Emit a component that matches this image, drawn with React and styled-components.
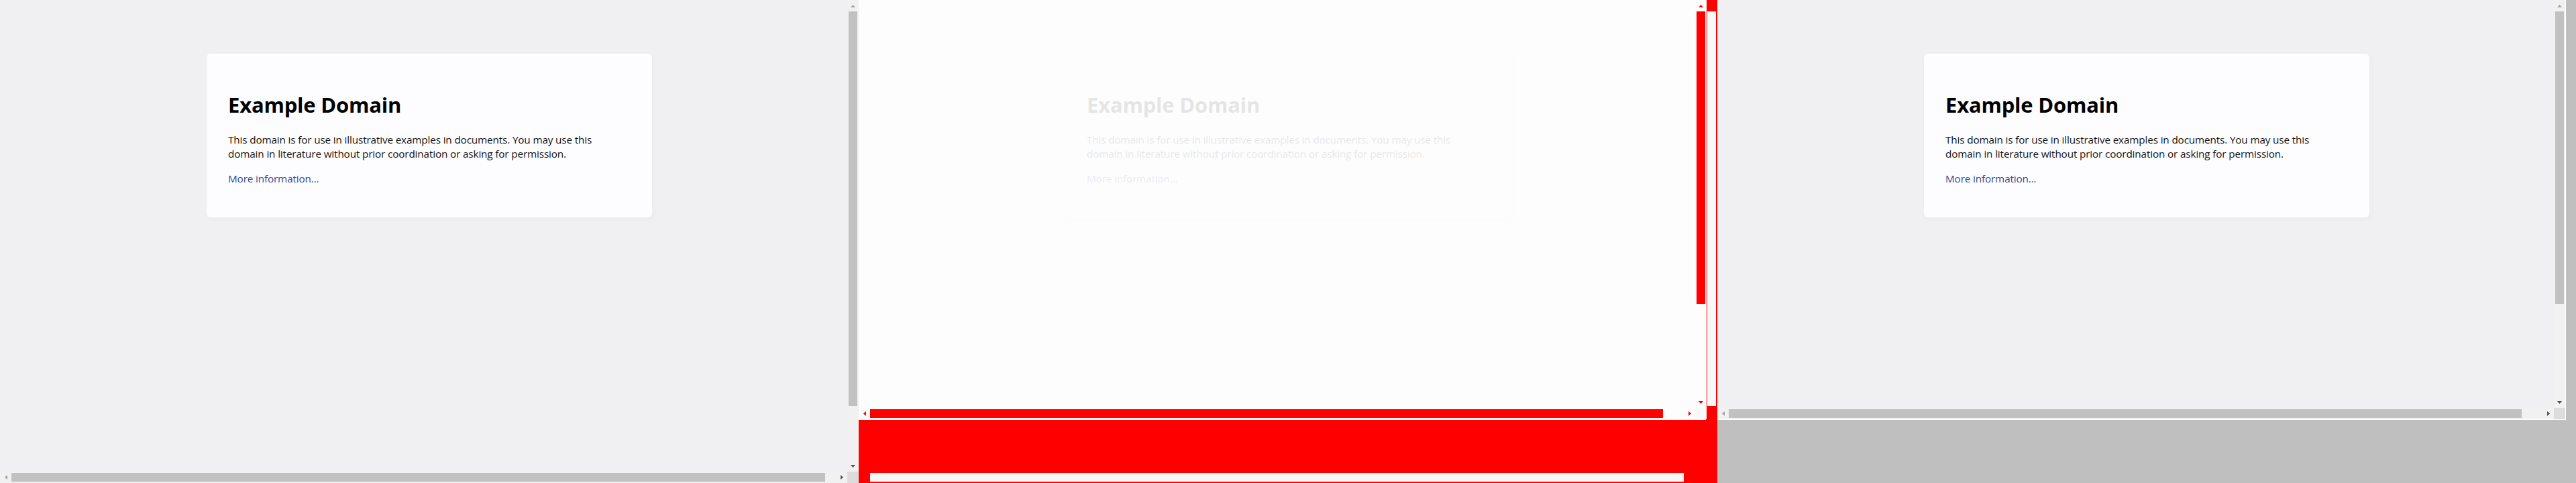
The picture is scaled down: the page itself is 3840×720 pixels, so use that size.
import React from "react";
import styled, { createGlobalStyle } from "styled-components";

const GlobalStyle = createGlobalStyle`
  html, body {
    margin: 0;
    padding: 0;
    background: #bfbfbf;
  }
  * {
    box-sizing: border-box;
  }
`;

const BAR = 17;

// scrollbar colour sets
const normal = {
  track: "#f1f1f1",
  thumb: "#c1c1c1",
  corner: "#dcdcdc",
  arrowOff: "#a3a3a3",
  arrowOn: "#505050",
};

const redOuter = {
  track: "#ff0000",
  thumb: "#f7f7f7",
  corner: "#ff0000",
  arrowOff: "#ff0000",
  arrowOn: "#ff0000",
};

const redInner = {
  track: "#fdfdfd",
  thumb: "#ff0000",
  corner: "#fafafa",
  arrowOff: "#ff0000",
  arrowOn: "#ff0000",
};

const Strip = styled.div`
  display: flex;
  flex-direction: row;
  width: 3840px;
  height: 720px;
  overflow: hidden;
`;

const Panel = styled.div`
  width: 1280px;
  height: 720px;
  flex: none;
  background: ${(p) => p.$bg};
  display: flex;
  flex-direction: column;
  align-items: flex-start;
  overflow: hidden;
`;

const Viewport = styled.div`
  display: grid;
  grid-template-columns: ${(p) => p.$w - BAR}px ${BAR}px;
  grid-template-rows: ${(p) => p.$h - BAR}px ${BAR}px;
  flex: none;
  border-right: ${(p) => (p.$edge ? `1px solid ${p.$edge}` : "none")};
  border-bottom: ${(p) => (p.$edge ? `1px solid ${p.$edge}` : "none")};
  position: relative;
  z-index: 1;
`;

const Content = styled.div`
  overflow: ${(p) => (p.$spill ? "visible" : "hidden")};
  background: ${(p) => p.$bg};
  position: relative;
  z-index: 1;
`;

const VTrack = styled.div`
  display: flex;
  flex-direction: column;
  background: ${(p) => p.$c.track};
`;

const HTrack = styled.div`
  display: flex;
  flex-direction: row;
  background: ${(p) => p.$c.track};
`;

const Corner = styled.div`
  background: ${(p) => p.$c.corner};
`;

const ArrowBtn = styled.div`
  width: ${BAR}px;
  height: ${BAR}px;
  flex: none;
  display: flex;
  align-items: center;
  justify-content: center;
`;

const VThumb = styled.div`
  flex: none;
  margin: 0 2px;
  height: ${(p) => p.$len}px;
  background: ${(p) => p.$c.thumb};
`;

const HThumb = styled.div`
  flex: none;
  margin: 2px 0;
  width: ${(p) => p.$len}px;
  background: ${(p) => p.$c.thumb};
`;

const Spacer = styled.div`
  flex: 1;
`;

const Page = styled.div`
  width: 100%;
  height: 100%;
  background: ${(p) => (p.$faded ? "#fdfdfd" : "#f0f0f2")};
  padding: 80px 0 0 308px;
  opacity: ${(p) => (p.$faded ? 0.09 : 1)};
  font-family: "Segoe UI", "Open Sans", "Noto Sans", sans-serif;
`;

const Card = styled.div`
  width: 664px;
  background: #fdfdff;
  border-radius: 6px;
  padding: 56px 32px 47px;
  box-shadow: 2px 3px 7px 2px rgba(0, 0, 0, 0.02);
`;

const Title = styled.h1`
  margin: 0;
  font-size: 31px;
  line-height: 40px;
  font-weight: 700;
  color: #000;
  letter-spacing: -0.2px;
`;

const Text = styled.p`
  margin: 22px 0 0;
  font-size: 15.3px;
  line-height: 21px;
  color: #111;
  width: 560px;
  letter-spacing: -0.15px;
`;

const Link = styled.a`
  display: block;
  margin-top: 16px;
  font-size: 15.3px;
  line-height: 21px;
  color: #38488f;
  text-decoration: none;
  letter-spacing: -0.15px;
`;

function Arrow({ dir, color }) {
  const pts = {
    up: "0,4 3.5,0 7,4",
    down: "0,0 7,0 3.5,4",
    left: "4,0 4,7 0,3.5",
    right: "0,0 4,3.5 0,7",
  }[dir];
  const vertical = dir === "up" || dir === "down";
  return (
    <svg
      width={vertical ? 7 : 4}
      height={vertical ? 4 : 7}
      viewBox={vertical ? "0 0 7 4" : "0 0 4 7"}
    >
      <polygon points={pts} fill={color} />
    </svg>
  );
}

function ExamplePage({ faded }) {
  return (
    <Page $faded={faded}>
      <Card>
        <Title>Example Domain</Title>
        <Text>
          This domain is for use in illustrative examples in documents. You may
          use this domain in literature without prior coordination or asking for
          permission.
        </Text>
        <Link href="#">More information...</Link>
      </Card>
    </Page>
  );
}

function Window({ w, h, colors, vLen, hLen, bg, edge, spill, children }) {
  return (
    <Viewport $w={w} $h={h} $edge={edge}>
      <Content $bg={bg} $spill={spill}>
        {children}
      </Content>
      <VTrack $c={colors}>
        <ArrowBtn>
          <Arrow dir="up" color={colors.arrowOff} />
        </ArrowBtn>
        <VThumb $c={colors} $len={vLen} />
        <Spacer />
        <ArrowBtn>
          <Arrow dir="down" color={colors.arrowOn} />
        </ArrowBtn>
      </VTrack>
      <HTrack $c={colors}>
        <ArrowBtn>
          <Arrow dir="left" color={colors.arrowOff} />
        </ArrowBtn>
        <HThumb $c={colors} $len={hLen} />
        <Spacer />
        <ArrowBtn>
          <Arrow dir="right" color={colors.arrowOn} />
        </ArrowBtn>
      </HTrack>
      <Corner $c={colors} />
    </Viewport>
  );
}

export default function App() {
  return (
    <>
      <GlobalStyle />
      <Strip>
        <Panel $bg="#f0f0f2">
          <Window w={1280} h={720} colors={normal} vLen={588} hLen={1213} bg="#f0f0f2">
            <ExamplePage />
          </Window>
        </Panel>

        <Panel $bg="#ff0000">
          <Window
            w={1280}
            h={720}
            colors={redOuter}
            vLen={588}
            hLen={1213}
            bg="#ff0000"
            spill
          >
            <Window
              w={1264}
              h={625}
              colors={redInner}
              vLen={436}
              hLen={1182}
              bg="#fdfdfd"
              edge="#fdfdfd"
            >
              <ExamplePage faded />
            </Window>
          </Window>
        </Panel>

        <Panel $bg="#bfbfbf">
          <Window
            w={1264}
            h={625}
            colors={normal}
            vLen={436}
            hLen={1182}
            bg="#f0f0f2"
            edge="#ffffff"
          >
            <ExamplePage />
          </Window>
        </Panel>
      </Strip>
    </>
  );
}
